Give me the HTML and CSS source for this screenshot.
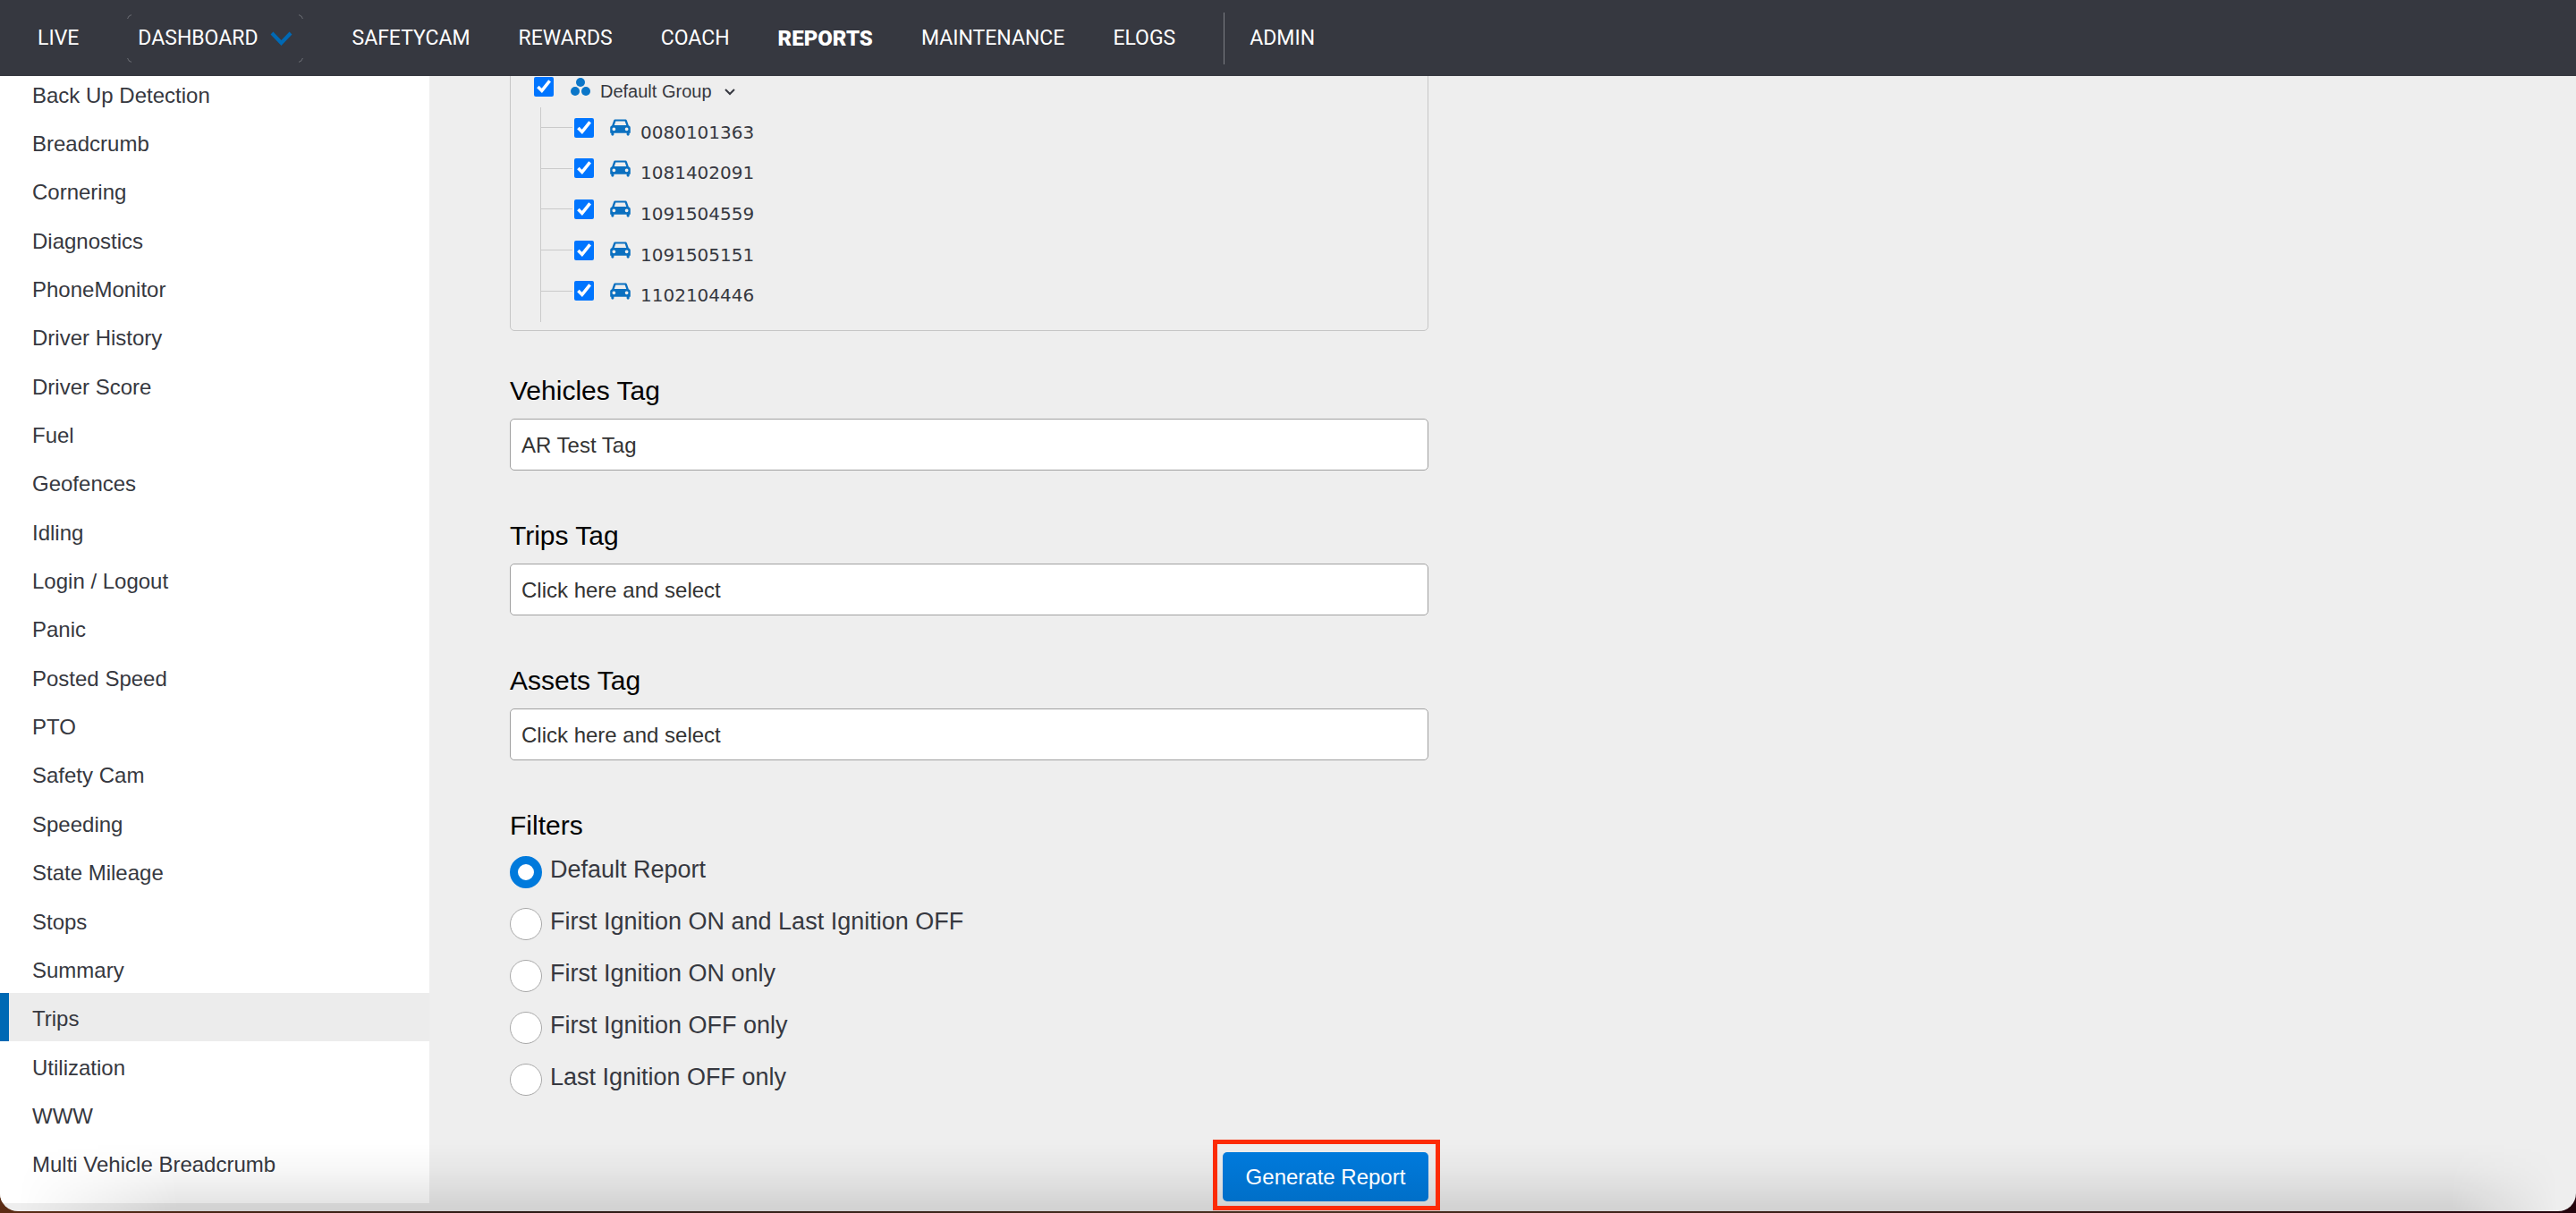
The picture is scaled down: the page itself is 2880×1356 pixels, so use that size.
FILE: index.html
```html
<!DOCTYPE html>
<html lang="en">
<head>
    <meta charset="UTF-8">
    <meta name="viewport" content="width=device-width, initial-scale=1.0">
    <title>Reports - Trips</title>
    <link rel="stylesheet" href="styles.css">
</head>
<body>
    <svg class="sprite" aria-hidden="true">
        <symbol id="car" viewBox="0 0 24 20">
            <path fill-rule="evenodd" d="M6.200 0.500h11.600c1 0 1.700 0.500 2 1.400l2 5.600c1.300 0.500 2.100 1.500 2.100 2.900v6.200h-1.200v1.600c0 2-3.200 2-3.200 0v-1.600H4.500v1.600c0 2-3.200 2-3.200 0v-1.600H0.100v-6.200c0-1.400 0.800-2.400 2.100-2.900l2-5.600c0.300-0.900 1-1.400 2-1.400zM6.600 2.500L4.900 7.300h14.200L17.400 2.500zM4.500 9.900a2 2 0 1 0 0 4a2 2 0 1 0 0-4zM19.500 9.900a2 2 0 1 0 0 4a2 2 0 1 0 0-4z"/>
        </symbol>
    </svg>

    <div class="window">
        <nav class="topnav">
            <a href="#">LIVE</a>
            <button type="button" class="nav-menu">
                DASHBOARD
                <svg width="25" height="16" viewBox="0 0 25 16"><path d="M2 2l10.500 11L23 2" fill="none" stroke="#0069b4" stroke-width="4"/></svg>
            </button>
            <a href="#">SAFETYCAM</a>
            <a href="#">REWARDS</a>
            <a href="#">COACH</a>
            <a href="#" class="current">REPORTS</a>
            <a href="#">MAINTENANCE</a>
            <a href="#">ELOGS</a>
            <a href="#" class="admin">ADMIN</a>
        </nav>

        <div class="page">
            <aside class="sidebar">
                <div class="report-list">
                    <a href="#">Back Up Detection</a>
                    <a href="#">Breadcrumb</a>
                    <a href="#">Cornering</a>
                    <a href="#">Diagnostics</a>
                    <a href="#">PhoneMonitor</a>
                    <a href="#">Driver History</a>
                    <a href="#">Driver Score</a>
                    <a href="#">Fuel</a>
                    <a href="#">Geofences</a>
                    <a href="#">Idling</a>
                    <a href="#">Login / Logout</a>
                    <a href="#">Panic</a>
                    <a href="#">Posted Speed</a>
                    <a href="#">PTO</a>
                    <a href="#">Safety Cam</a>
                    <a href="#">Speeding</a>
                    <a href="#">State Mileage</a>
                    <a href="#">Stops</a>
                    <a href="#">Summary</a>
                    <a href="#" class="selected">Trips</a>
                    <a href="#">Utilization</a>
                    <a href="#">WWW</a>
                    <a href="#">Multi Vehicle Breadcrumb</a>
                </div>
            </aside>

            <main class="content">
                <form class="report-form">
                    <div class="tree">
                        <div class="tree-root">
                            <input type="checkbox" id="group" checked>
                            <svg class="group-icon" width="22" height="20" viewBox="0 0 22 20" fill="#0b76c8"><circle cx="11" cy="5" r="5"/><circle cx="5" cy="15" r="5"/><circle cx="17" cy="15" r="5"/></svg>
                            <label for="group">Default Group</label>
                            <svg class="toggle" width="12" height="8" viewBox="0 0 12 8"><path d="M1 1l5 5l5-5" fill="none" stroke="#363840" stroke-width="2"/></svg>
                        </div>
                        <ul class="vehicles">
                            <li>
                                <input type="checkbox" id="v1" checked>
                                <svg class="car" width="23" height="19"><use href="#car"/></svg>
                                <label for="v1">0080101363</label>
                            </li>
                            <li>
                                <input type="checkbox" id="v2" checked>
                                <svg class="car" width="23" height="19"><use href="#car"/></svg>
                                <label for="v2">1081402091</label>
                            </li>
                            <li>
                                <input type="checkbox" id="v3" checked>
                                <svg class="car" width="23" height="19"><use href="#car"/></svg>
                                <label for="v3">1091504559</label>
                            </li>
                            <li>
                                <input type="checkbox" id="v4" checked>
                                <svg class="car" width="23" height="19"><use href="#car"/></svg>
                                <label for="v4">1091505151</label>
                            </li>
                            <li>
                                <input type="checkbox" id="v5" checked>
                                <svg class="car" width="23" height="19"><use href="#car"/></svg>
                                <label for="v5">1102104446</label>
                            </li>
                        </ul>
                    </div>

                    <div class="field">
                        <label for="vehiclesTag">Vehicles Tag</label>
                        <input type="text" id="vehiclesTag" value="AR Test Tag">
                    </div>
                    <div class="field">
                        <label for="tripsTag">Trips Tag</label>
                        <input type="text" id="tripsTag" value="Click here and select">
                    </div>
                    <div class="field">
                        <label for="assetsTag">Assets Tag</label>
                        <input type="text" id="assetsTag" value="Click here and select">
                    </div>

                    <fieldset class="filters">
                        <legend>Filters</legend>
                        <div class="radio-row">
                            <input type="radio" name="filter" id="f1" checked>
                            <label for="f1">Default Report</label>
                        </div>
                        <div class="radio-row">
                            <input type="radio" name="filter" id="f2">
                            <label for="f2">First Ignition ON and Last Ignition OFF</label>
                        </div>
                        <div class="radio-row">
                            <input type="radio" name="filter" id="f3">
                            <label for="f3">First Ignition ON only</label>
                        </div>
                        <div class="radio-row">
                            <input type="radio" name="filter" id="f4">
                            <label for="f4">First Ignition OFF only</label>
                        </div>
                        <div class="radio-row">
                            <input type="radio" name="filter" id="f5">
                            <label for="f5">Last Ignition OFF only</label>
                        </div>
                    </fieldset>

                    <div class="highlight">
                        <button type="submit" class="generate">Generate Report</button>
                    </div>
                </form>
            </main>
        </div>
    </div>
</body>
</html>
```

FILE: styles.css
```css
* {
    box-sizing: border-box;
}
body {
    margin: 0;
    height: 100vh;
    overflow: hidden;
    font-family: "Liberation Sans", Arial, sans-serif;
    font-size: 24px;
    color: #363840;
    background: linear-gradient(to right, #5c2d15, #2c1a16 20%, #4a3020 50%, #24040c);
}
a {
    color: inherit;
    text-decoration: none;
}
.sprite {
    display: none;
}
.window {
    position: relative;
    display: flex;
    flex-direction: column;
    height: calc(100vh - 2px);
    overflow: hidden;
    border-radius: 0 0 20px 20px;
    background-color: #eeeeee;
}
/* soft shade along the bottom edge */
.window::after {
    content: "";
    position: absolute;
    left: 0;
    right: 0;
    bottom: 0;
    height: 76px;
    background: linear-gradient(to bottom, transparent, rgba(0, 0, 0, 0.03) 40%, rgba(0, 0, 0, 0.12));
    mask-image: linear-gradient(to right, transparent 20px, #000 200px, #000 calc(100% - 140px), transparent calc(100% - 20px));
    pointer-events: none;
}

/* Top navigation */
.topnav {
    display: flex;
    align-items: center;
    gap: 54px;
    flex: none;
    height: 85px;
    padding-left: 42px;
    font-family: Roboto, "Liberation Sans", sans-serif;
    font-size: 23px;
    color: #fff;
    background-color: #363840;
    z-index: 1;
}
.nav-menu {
    position: relative;
    display: flex;
    align-items: center;
    gap: 14px;
    height: 54px;
    padding: 0 12px;
    border: none;
    background: none;
    font: inherit;
    color: inherit;
    cursor: pointer;
}
/* only the rounded corners of the outline show */
.nav-menu::before {
    content: "";
    position: absolute;
    inset: 0;
    border: 1px solid #7c7e84;
    border-radius: 6px;
    mask: linear-gradient(#000 0 0) 0 0 / 5px 5px no-repeat,
          linear-gradient(#000 0 0) 100% 0 / 5px 5px no-repeat,
          linear-gradient(#000 0 0) 0 100% / 5px 5px no-repeat,
          linear-gradient(#000 0 0) 100% 100% / 5px 5px no-repeat;
}
.topnav .current {
    font-size: 24px;
    font-weight: 900;
}
.topnav .admin {
    height: 58px;
    padding-left: 28px;
    border-left: 1px solid #7c7e84;
    line-height: 58px;
}

/* Report list */
.page {
    display: flex;
    flex: 1;
    min-height: 0;
}
.sidebar {
    display: flex;
    flex: none;
    width: 480px;
    margin-bottom: 9px;
    padding-bottom: 18px;
    background-color: #fff;
}
.report-list {
    display: flex;
    flex-direction: column;
    flex: 1;
    margin-top: -8px;
}
.report-list a {
    display: flex;
    flex: 1;
    align-items: center;
    padding: 5px 26px 0;
    border-left: 10px solid transparent;
}
.report-list .selected {
    border-left-color: #0069b4;
    background-color: #ececec;
}

/* Form */
.content {
    flex: 1;
    padding-left: 90px;
}
.report-form {
    max-width: 1027px;
}
.tree {
    margin-top: -30px;
    margin-bottom: 47px;
    padding: 18px 26px 9px;
    border: 1px solid #c6c6c6;
    border-radius: 5px;
}
.tree input {
    width: 22px;
    height: 22px;
    margin: 0;
    accent-color: #0075ff;
}
.tree-root {
    display: flex;
    align-items: center;
    height: 46px;
    font-size: 20px;
}
.tree-root label,
.vehicles label {
    margin-left: 11px;
    padding-top: 10px;
}
.group-icon {
    margin-left: 19px;
}
.toggle {
    margin-left: 14px;
    margin-top: 12px;
}
.vehicles {
    display: grid;
    grid-auto-rows: 1fr;
    height: 240px;
    margin: 0 0 0 7px;
    padding: 0 0 12px;
    border-left: 1px solid #cacaca;
    list-style: none;
}
.vehicles li {
    display: flex;
    align-items: center;
    font-family: "DejaVu Sans", sans-serif;
    font-size: 20px;
}
.vehicles li::before {
    content: "";
    width: 35px;
    margin-right: 2px;
    border-top: 1px solid #cacaca;
}
.car {
    margin-left: 18px;
    fill: #0b70c0;
}
.field {
    display: flex;
    flex-direction: column;
    gap: 11px;
    margin-bottom: 53px;
}
.field label,
.filters legend {
    padding: 0;
    font-size: 30px;
    line-height: 40px;
    color: #000;
}
.field input {
    width: 100%;
    height: 58px;
    padding: 1px 12px 0;
    border: 1px solid #a0a0a0;
    border-radius: 5px;
    background-color: #fff;
    font: inherit;
    color: #333;
}
.filters {
    margin: 0;
    padding: 0;
    border: none;
}
.filters legend {
    margin-bottom: 14px;
}
.radio-row {
    display: flex;
    gap: 9px;
    margin-bottom: 22px;
    font-size: 27px;
    line-height: 30px;
}
.radio-row input {
    appearance: none;
    width: 36px;
    height: 36px;
    margin: 0;
    border: 1px solid #a8a8a8;
    border-radius: 50%;
    background-color: #fff;
}
.radio-row input:checked {
    border: 9px solid #007adc;
}
.highlight {
    position: relative;
    z-index: 1;
    width: fit-content;
    margin: 27px -13px 0 auto;
    padding: 9px 8px 5px 6px;
    border: 5px solid #fc2b05;
}
.generate {
    display: block;
    width: 230px;
    height: 55px;
    padding: 0;
    border: none;
    border-radius: 5px;
    background: linear-gradient(to bottom, #007adc, #006fc8);
    font: inherit;
    color: #fff;
    cursor: pointer;
}
```
